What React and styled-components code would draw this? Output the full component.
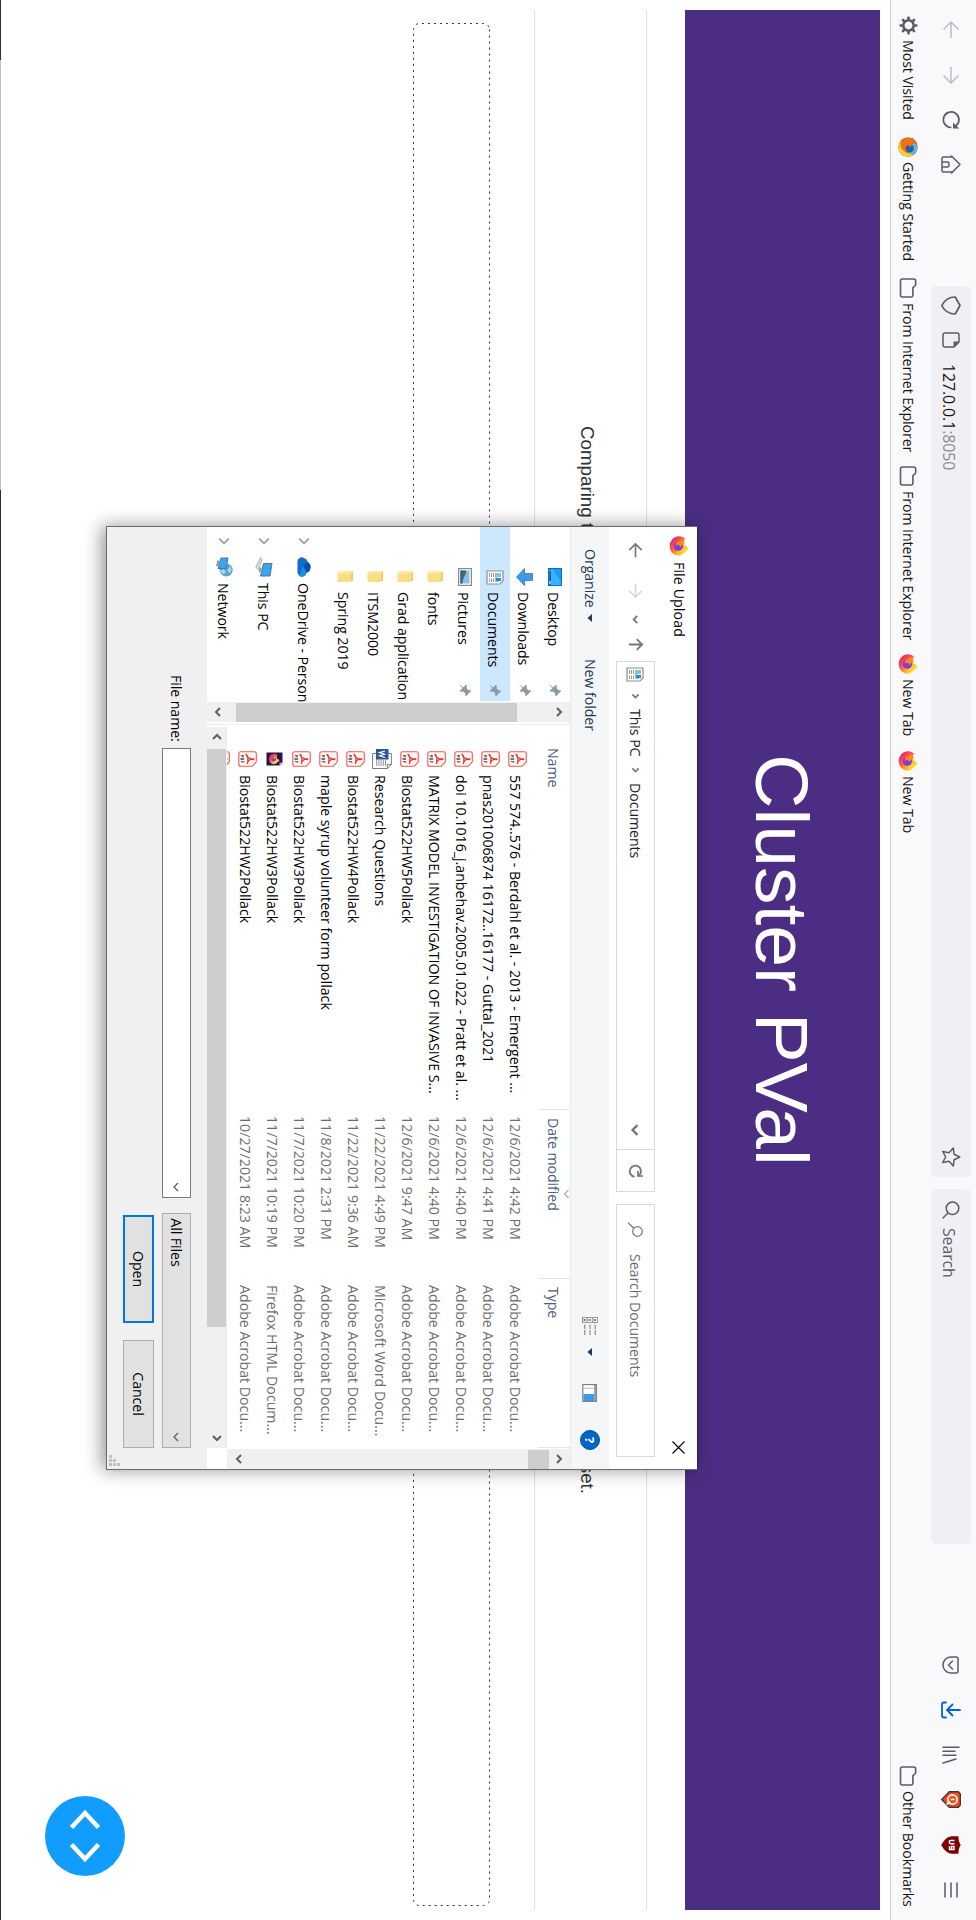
import React from 'react';
import styled, { createGlobalStyle, css } from 'styled-components';

const Global = createGlobalStyle`
  html, body { margin: 0; padding: 0; background: #fff; overflow: hidden; }
  * { box-sizing: border-box; }
`;

const ui = css`
  font-family: 'Open Sans', 'Noto Sans', sans-serif;
  font-size: 14.2px;
  letter-spacing: -0.08px;
  line-height: 20px;
  white-space: nowrap;
`;

/* ---------- screen ---------- */
const Viewport = styled.div`
  width: 976px;
  height: 1920px;
  overflow: hidden;
`;
const Screen = styled.div`
  ${ui}
  position: relative;
  display: flex;
  flex-direction: column;
  width: 1920px;
  height: 976px;
  background: #fff;
  color: #15141a;
  transform-origin: 0 0;
  transform: translateX(976px) rotate(90deg);
`;
const Svg = styled.svg`
  display: block;
  flex: none;
  overflow: visible;
`;

/* ---------- browser chrome ---------- */
const Chrome = styled.div`
  height: 86px;
  flex: none;
  background: #f9f9fb;
  border-bottom: 1px solid #cccccf;
`;
const NavBar = styled.div`
  display: flex;
  align-items: center;
  height: 50px;
  padding: 0 8px 0 7px;
`;
const NavButton = styled.div`
  display: flex;
  align-items: center;
  justify-content: center;
  width: 45px;
  height: 40px;
  opacity: ${(p) => (p.$off ? 0.4 : 1)};
`;
const Field = styled.div`
  display: flex;
  align-items: center;
  width: ${(p) => p.$width}px;
  height: 40px;
  margin-left: ${(p) => p.$left}px;
  padding: 0 10px 0 9px;
  border-radius: 5px;
  background: #f0f0f4;
  font-size: 15.9px;
  letter-spacing: -0.1px;
`;
const FieldText = styled.span`
  margin-left: ${(p) => p.$left}px;
  padding-top: 3px;
  flex: 1;
  color: ${(p) => p.$color || '#15141a'};
  i { font-style: normal; color: #8a8a90; }
`;
const IconSlot = styled.span`
  display: flex;
  justify-content: center;
  align-items: center;
  width: 20px;
  height: 20px;
  margin-left: ${(p) => p.$left || 0}px;
  flex: none;
`;
const Spacer = styled.div`
  flex: 1;
`;
const Bookmarks = styled.div`
  display: flex;
  align-items: center;
  height: 35px;
  padding-left: 15px;
`;
const Bookmark = styled.div`
  display: flex;
  align-items: center;
  gap: 5px;
  width: ${(p) => p.$width}px;
`;

/* ---------- page ---------- */
const Page = styled.main`
  display: flex;
  flex-direction: column;
  flex: 1;
  padding: 10px 10px 0;
  font-family: 'Liberation Sans', Arial, sans-serif;
`;
const Banner = styled.h1`
  display: flex;
  align-items: center;
  justify-content: center;
  height: 195px;
  margin: 0 0 38px;
  background: #4b2e83;
  color: #fff;
  font-weight: 400;
  font-size: 75px;
  letter-spacing: 0;
  line-height: 90px;
`;
const Intro = styled.section`
  display: flex;
  justify-content: space-between;
  height: 113px;
  padding: 48px 416px 0 416px;
  border-top: 1px solid #e1e1e1;
  border-bottom: 1px solid #e1e1e1;
  color: #333;
  font-size: 18.75px;
  letter-spacing: 0;
  line-height: 22px;
`;
const DropZone = styled.div`
  position: relative;
  width: 1883px;
  height: 77px;
  margin: 44px 0 0 13px;
`;
const DashOutline = styled(Svg)`
  position: absolute;
  inset: 0;
`;
const DebugButton = styled.button`
  position: absolute;
  left: 1796px;
  top: 851px;
  display: flex;
  align-items: center;
  justify-content: center;
  width: 80px;
  height: 80px;
  padding: 0;
  border: 0;
  border-radius: 50%;
  background: #119dff;
`;
const TaskbarEdge = styled.div`
  position: absolute;
  left: 0;
  right: 0;
  bottom: 0;
  height: 1px;
  background: linear-gradient(90deg, #333 60px, #c0c0c0 60px, #c0c0c0 490px, #2b2b2b 490px);
`;

/* ---------- dialog ---------- */
const Dialog = styled.div`
  position: absolute;
  left: 526px;
  top: 278px;
  display: flex;
  flex-direction: column;
  width: 944px;
  height: 592px;
  border: 1px solid #6b6b6b;
  border-top-color: #33215a;
  background: #fff;
  color: #000;
  box-shadow: 0 4px 17px rgba(0, 0, 0, 0.42);
`;
const TitleBar = styled.div`
  display: flex;
  align-items: center;
  height: 36px;
  margin-bottom: 1px;
  padding: 0 15px 0 9px;
  gap: 6px;
  letter-spacing: 0.1px;
`;
const AddressRow = styled.div`
  display: flex;
  align-items: center;
  height: 51px;
  padding: 0 0 2px 16px;
`;
const NavSlot = styled.div`
  display: flex;
  width: ${(p) => p.$width}px;
`;
const Outline = styled.div`
  display: flex;
  align-items: center;
  width: ${(p) => p.$width}px;
  height: 39px;
  margin-right: ${(p) => p.$gap || 0}px;
  padding-left: ${(p) => p.$pad}px;
  border: 1px solid #d9d9d9;
  color: ${(p) => p.$color || '#222'};
`;
const Crumb = styled.span`
  width: ${(p) => p.$width}px;
  padding-top: 1px;
`;
const RefreshCell = styled.div`
  display: flex;
  align-items: center;
  justify-content: center;
  width: 42px;
  height: 37px;
  margin-left: 13px;
  border-left: 1px solid #d9d9d9;
`;
const CommandBar = styled.div`
  display: flex;
  align-items: center;
  height: 39px;
  padding: 0 19px 0 22px;
  background: #f5f6f7;
  border-bottom: 1px solid #e8e9ea;
  color: #1e395b;
`;
const Command = styled.span`
  display: flex;
  align-items: center;
  width: ${(p) => p.$width}px;
  gap: 6px;
`;
const Body = styled.div`
  display: flex;
  height: 363px;
`;
const Tree = styled.div`
  width: 175px;
  overflow: hidden;
`;
const TreeRow = styled.div`
  display: flex;
  align-items: center;
  width: 174px;
  height: ${(p) => (p.$root ? 40 : 30)}px;
  margin-top: ${(p) => p.$top || 0}px;
  padding-left: ${(p) => (p.$root ? 8 : 40)}px;
  background: ${(p) => (p.$selected ? '#cce8ff' : 'transparent')};
`;
const TreeLabel = styled.span`
  flex: 1;
  margin-left: ${(p) => (p.$root ? 6 : 5)}px;
  padding-top: ${(p) => (p.$root ? 2 : 3)}px;
`;
const PinSlot = styled.span`
  width: 18px;
  height: 14px;
`;
const VBar = styled.div`
  display: flex;
  flex-direction: column;
  align-items: center;
  width: 20px;
  height: ${(p) => p.$height}px;
  padding: 6px 0;
  background: #f0f0f0;
`;
const VThumb = styled.div`
  width: 19px;
  height: ${(p) => p.$size}px;
  margin: ${(p) => p.$margin};
  background: #cdcdcd;
`;
const Files = styled.div`
  flex: 1;
  display: flex;
  flex-direction: column;
  margin-left: 2px;
  border-left: 1px solid #f0f0f0;
`;
const FilesTop = styled.div`
  display: flex;
  height: 343px;
`;
const Listing = styled.div`
  width: 724px;
  overflow: hidden;
`;
const HeaderRow = styled.div`
  display: flex;
  height: 32px;
  margin-bottom: 7px;
  color: #4c607a;
`;
const HeaderCell = styled.div`
  position: relative;
  width: ${(p) => p.$width}px;
  padding: 7px 0 0 ${(p) => p.$pad}px;
  border-right: 1px solid #e5e5e5;
`;
const SortMark = styled(Svg)`
  position: absolute;
  left: 79px;
  top: 1px;
`;
const FileRow = styled.div`
  display: flex;
  align-items: center;
  height: 27px;
  letter-spacing: -0.01px;
`;
const FileIcon = styled.span`
  display: flex;
  justify-content: center;
  width: 24px;
  margin-left: 22px;
`;
const FileName = styled.span`
  width: 345px;
  padding: 4px 0 0 4px;
`;
const Meta = styled.span`
  width: ${(p) => p.$width}px;
  padding-top: 4px;
  color: #6d6d6d;
`;
const HRow = styled.div`
  display: flex;
  height: 20px;
`;
const HBar = styled.div`
  display: flex;
  align-items: center;
  width: 721px;
  margin-left: 2px;
  height: 20px;
  padding-left: 5px;
  background: #f0f0f0;
`;
const HThumb = styled.div`
  width: 578px;
  height: 19px;
  margin: 1px 106px 0 7px;
  background: #cdcdcd;
`;
const Footer = styled.div`
  position: relative;
  flex: 1;
  padding: 16px 21px 0 148px;
  background: #f0f0f0;
`;
const FooterRow = styled.div`
  display: flex;
  align-items: center;
  justify-content: ${(p) => (p.$end ? 'flex-end' : 'flex-start')};
  gap: ${(p) => (p.$end ? 17 : 0)}px;
  margin-bottom: 8px;
`;
const FieldLabel = styled.span`
  width: 73px;
`;
const Combo = styled.div`
  display: flex;
  align-items: center;
  justify-content: space-between;
  width: ${(p) => p.$width}px;
  height: 29px;
  margin-right: ${(p) => p.$gap || 0}px;
  padding: 0 5px 0 4px;
  border: 1px solid ${(p) => (p.$input ? '#7a7a7a' : '#adadad')};
  background: ${(p) => (p.$input ? '#fff' : '#e1e1e1')};
`;
const Button = styled.button`
  ${ui}
  width: 108px;
  height: 31px;
  padding: 0;
  border: ${(p) => (p.$primary ? '2px solid #0078d7' : '1px solid #adadad')};
  background: #e1e1e1;
  color: #000;
`;
const Grip = styled(Svg)`
  position: absolute;
  right: 3px;
  bottom: 2px;
`;

/* ---------- icons ---------- */
const line = { fill: 'none', stroke: '#5b5b66', strokeWidth: 1.5, strokeLinecap: 'round', strokeLinejoin: 'round' };

const Arrow = ({ dir = 'left', color = '#5b5b66', size = 18, w = 1.4 }) => {
  const d = { left: 'M17 9H1M8.5 1.5L1 9l7.5 7.5', right: 'M1 9h16M9.500 1.500L17 9l-7.500 7.500', up: 'M9 17V1M2.500 7.500L9 1l6.500 6.500' }[dir];
  return <Svg width={size} height={size} viewBox="0 0 18 18"><path d={d} fill="none" stroke={color} strokeWidth={w} /></Svg>;
};
const Chevron = ({ dir, w = 10, h = 10, color = '#606060', stroke = 2 }) => {
  const d = { down: 'M1 3l4 4 4-4', up: 'M1 7l4-4 4 4', left: 'M7 1L3 5l4 4', right: 'M3 1l4 4-4 4' }[dir];
  return <Svg width={w} height={h} viewBox="0 0 10 10"><path d={d} fill="none" stroke={color} strokeWidth={stroke} /></Svg>;
};
const Reload = () => (
  <Svg width="18" height="18" viewBox="0 0 18 18">
    <path d="M16.500 9.300A7.800 7.800 0 1 1 14.500 3.600" {...line} strokeWidth="1.700" />
    <path d="M17.500 0.800v6.200h-6z" fill="#5b5b66" />
  </Svg>
);
const Home = () => (
  <Svg width="19" height="20" viewBox="0 0 19 20">
    <path d="M1 9.500L9.500 1 18 9.500M2 8.800V17.500Q2 19 3.500 19h12Q17 19 17 17.500V8.800M7 19v-5.500Q7 12 8.500 12h2Q12 12 12 13.500V19" {...line} />
  </Svg>
);
const Shield = () => (
  <Svg width="19" height="20" viewBox="0 0 19 20">
    <path d="M9.500 1L18 5.800C18 12 15 16.500 9.500 19.200 4 16.500 1 12 1 5.800z" {...line} strokeWidth="1.700" />
  </Svg>
);
const PageInfo = () => (
  <Svg width="16" height="18" viewBox="0 0 16 18">
    <path d="M10 1H3Q1 1 1 3v12q0 2 2 2h10q2 0 2-2V6z" {...line} />
    <path d="M9.500 1v5.500H15z" fill="#5b5b66" />
  </Svg>
);
const Star = () => (
  <Svg width="20" height="20" viewBox="0 0 20 20">
    <path d="M10 1.200l2.700 5.700 6.200.8-4.600 4.300 1.200 6.300L10 15.300l-5.500 3 1.200-6.300L1.100 7.700l6.200-.8z" {...line} />
  </Svg>
);
const Search = () => (
  <Svg width="18" height="18" viewBox="0 0 18 18">
    <circle cx="7.300" cy="7.500" r="6.300" {...line} /><path d="M12 12l5 5" {...line} />
  </Svg>
);
const Pocket = () => (
  <Svg width="18" height="17" viewBox="0 0 18 17">
    <path d="M3 1h12q2 0 2 2v5c0 5-4 8-8 8S1 13 1 8V3q0-2 2-2zM5 6.500l4 4 4-4" {...line} />
  </Svg>
);
const Download = () => (
  <Svg width="18" height="20" viewBox="0 0 18 20">
    <path d="M9 1v13M3.500 8.500L9 14l5.500-5.500M1.500 15v2q0 2 2 2h11q2 0 2-2v-2" fill="none" stroke="#0061e0" strokeWidth="1.800" strokeLinecap="round" />
  </Svg>
);
const Library = () => (
  <Svg width="18" height="18" viewBox="0 0 18 18"><path d="M1.200 1v16M5.200 5v12M9.200 4v13M13 4l4 13" {...line} /></Svg>
);
const RedShield = () => (
  <Svg width="17" height="20" viewBox="0 0 17 20">
    <path d="M3 .7h11l2.300 2v9L8.500 19.300.7 11.700v-9z" fill="#ff4619" stroke="#3c3c3c" strokeWidth="1.400" />
    <circle cx="8.500" cy="8.500" r="4.600" fill="none" stroke="#fff" strokeWidth="1.700" />
    <path d="M8.500 6.500v3.800M10.500 11l3 3.300" stroke="#fff" strokeWidth="1.700" />
  </Svg>
);
const Ublock = () => (
  <Svg width="18" height="20" viewBox="0 0 18 20">
    <path d="M9 .3Q12 2.500 17.700 2.600v7Q17 15.500 9 19.800 1 15.500.3 9.600v-7Q6 2.500 9 .3z" fill="#800000" />
    <path d="M4.500 6.500v3.800q0 1.500 1.600 1.500t1.600-1.500V6.500M10 11.500h3.500V7H10.500v2.500h3" fill="none" stroke="#fff" strokeWidth="1.400" />
  </Svg>
);
const Menu = () => (
  <Svg width="16" height="14" viewBox="0 0 16 14"><path d="M1 2h14M1 8h14M1 14h14" {...line} transform="translate(0 -1)" /></Svg>
);
const Gear = () => (
  <Svg width="19" height="19" viewBox="-9.500 -9.500 19 19">
    <circle r="5.200" fill="none" stroke="#5b5b66" strokeWidth="2.500" />
    {[0, 45, 90, 135, 180, 225, 270, 315].map((a) => (
      <rect key={a} x="-1.300" y="-9" width="2.600" height="3.500" rx=".8" fill="#5b5b66" transform={`rotate(${a})`} />
    ))}
  </Svg>
);
const FolderOutline = () => (
  <Svg width="20" height="18" viewBox="0 0 20 18">
    <path d="M1 3.500Q1 1.300 3.200 1.300H6q1.200 0 2 .9l1.700 1.900H17q2 0 2 2V14.500q0 2-2 2H3q-2 0-2-2z" {...line} strokeWidth="1.600" />
  </Svg>
);
const Firefox = ({ size = 20, id }) => (
  <Svg width={size} height={size} viewBox="0 0 20 20">
    <defs>
      <linearGradient id={id} x1=".85" y1=".1" x2=".15" y2=".85">
        <stop offset="0" stopColor="#fff044" /><stop offset=".35" stopColor="#ffb52e" />
        <stop offset=".6" stopColor="#ff6a34" /><stop offset="1" stopColor="#f0246c" />
      </linearGradient>
    </defs>
    <path d="M13 .2C15 2 15.500 3 16.500 4.200c1 .7 3.300 3 3.300 6.600A9.800 9.300 0 0 1 .3 11C.1 8 1.200 5 3.200 3.200c0 1 .2 1.500.7 2 1.500-.8 4-.8 5.300-.2C9.800 3 11 1.300 13 .2z" fill={`url(#${id})`} />
    <circle cx="10.200" cy="10.600" r="4.500" fill="#7a3be0" />
    <path d="M3.500 5.500C6 4.500 8 5.500 9.300 7.500c1 .3 1.500.5 1.600 1-.3 1-2.200 1-2.400 2.300-.2 1 .8 1.700 2 1.700-2 1.500-5 .2-5-2.700C4 9 3.500 7 3.500 5.500z" fill="#ff8a1c" />
    <path d="M12 6c2 .8 3.300 2.500 3.100 5C17 8.500 15.500 5.500 12 6z" fill="#ffd43a" />
  </Svg>
);
const OldFirefox = () => (
  <Svg width="20" height="20" viewBox="0 0 20 20">
    <circle cx="10" cy="10" r="9.800" fill="#e8661a" />
    <path d="M6.500 2.500Q10-.5 15 1.800 18.500 5 17.500 9l-4 2.500-6-3z" fill="#5ab9e2" />
    <circle cx="11.300" cy="8.500" r="4.300" fill="#1f62a8" />
    <path d="M1 5c2-.5 4 0 6 1.500 2 0 3.500.8 3.500 1.500-1.500.5-2.500 1.500-2 3 1.500 2 5 1.800 7-.5.800 4-2 7-6 6.500C4 16.500.5 11 1 5z" fill="#f0731c" />
    <path d="M17.600 4.300c3.600 5.200 1.900 12-4.600 15C9 20 5 18.500 3 16.500c7 2.500 13.500-.5 14.600-12.200z" fill="#ffcf3a" />
  </Svg>
);
const DocsIcon = ({ w = 15, h = 18 }) => (
  <Svg width={w} height={h} viewBox="0 0 15 18">
    <path d="M1 1h10l3 3v13H1z" fill="#fff" stroke="#8b8b8b" strokeWidth="1.200" />
    <path d="M3 4h4M3 6h4M9 6h3M3 8h9" stroke="#2d8ad0" strokeWidth="1.100" />
    <rect x="8" y="3" width="3" height="5" fill="#2d8ad0" />
    <path d="M3 10.500h4M8.500 10.500H12M3 12.500h4M8.500 12.500H12M3 14.500h4M8.500 14.500H12" stroke="#9a9a9a" />
  </Svg>
);
const DesktopIcon = () => (
  <Svg width="18" height="14" viewBox="0 0 18 14">
    <rect x=".5" y=".5" width="17" height="13" fill="#1c9df2" stroke="#0c6fbd" />
    <path d="M1 9L14 1h3v10H1z" fill="#39b2ff" /><path d="M1 11.800h16" stroke="#0b5fa5" strokeWidth="1.500" />
    <path d="M2 12h1M13 12h3" stroke="#fff" />
  </Svg>
);
const DownIcon = () => (
  <Svg width="18" height="17" viewBox="0 0 18 17">
    <path d="M5.500.5h7v8h5L9 16.500.5 8.500h5z" fill="#3e9bec" stroke="#2a79c4" strokeWidth=".8" />
  </Svg>
);
const PictureIcon = () => (
  <Svg width="18" height="14" viewBox="0 0 18 14">
    <rect x=".6" y=".6" width="16.800" height="12.800" fill="#fff" stroke="#8a8a8a" strokeWidth="1.200" />
    <rect x="2.500" y="2.500" width="13" height="9" fill="#8dbde8" />
    <path d="M2.500 6c4-1 5 3 13 3.500v2h-13z" fill="#3e6f63" /><path d="M2.500 10h13v1.500h-13z" fill="#2d5ea9" />
  </Svg>
);
const FolderIcon = () => (
  <Svg width="18" height="18" viewBox="0 0 18 18">
    <path d="M3 1h10v14H3z" fill="#f3cd6c" /><path d="M5.500 3H14v13.500H4.500z" fill="#fbdd86" />
    <path d="M3 1l2.500 2v13.500L3 15z" fill="#ffe9a8" />
  </Svg>
);
const OneDriveIcon = () => (
  <Svg width="20" height="14" viewBox="0 0 20 14">
    <path d="M1.200 6.500A4.500 4.500 0 0 1 5 3.400 6 6 0 0 1 15.800 4.500 4.300 4.300 0 0 1 18.500 11.700Q17.500 13.500 15 13.500H5Q1.500 13.500.4 10.500-.2 8.500 1.200 6.500z" fill="#0f6cce" />
    <path d="M5 3.400A6 6 0 0 1 15.800 4.500L9 8z" fill="#0a4fa8" /><path d="M9 8l6.800-3.500a4.300 4.300 0 0 1 2.700 7.200z" fill="#1f8ceb" />
  </Svg>
);
const PcIcon = () => (
  <Svg width="20" height="18" viewBox="0 0 20 18">
    <path d="M6.500 1L19 3v9.500L6.500 9.500z" fill="#35a7f5" stroke="#53758f" />
    <path d="M11 11.500l5 1.500-2 1.500-4-1.500z" fill="#8c9499" />
    <path d="M.5 12.500L3 10.800l9.500 4.200-2.500 2.300z" fill="#d7dbde" stroke="#9ba3a8" strokeWidth=".7" />
  </Svg>
);
const NetworkIcon = () => (
  <Svg width="20" height="18" viewBox="0 0 20 18">
    <circle cx="13" cy="6.800" r="6.500" fill="#5ba4c9" /><path d="M9 3q4-3 7 0l-2 3zM12 9l4-2 1 3-3 3z" fill="#a8d8e8" />
    <path d="M1 5l10.500 2v8L1 12z" fill="#35a7f5" stroke="#53758f" /><path d="M4 13.500l5 1.500v2l-6-1.500z" fill="#8c9499" />
  </Svg>
);
const PinIcon = () => (
  <Svg width="14" height="14" viewBox="0 0 14 14">
    <path d="M8 .8L13.200 6 12 7 10.800 6.600 8.600 8.800 8.800 11.500 7.800 12.300 5.200 9.600.8 13.200 4.400 8.800 1.700 6.200 2.600 5.200 5.200 5.400 7.400 3.200 7 2z" fill="#8d99a3" />
  </Svg>
);
const PdfIcon = () => (
  <Svg width="16" height="19" viewBox="0 0 16 19">
    <path d="M2.500.7h8.300l4.500 4v11.500q0 2-2 2H2.700q-2 0-2-2V2.700q0-2 1.800-2z" fill="#fff8f7" stroke="#f5564f" strokeWidth="1.100" />
    <path d="M3 11.300C6.500 9.800 8 7 7.800 4.300 7.500 2.500 9 2.800 8.500 4.800 8.300 8 10.500 9.300 13 9.600M3 11.300c1-2 5.500-2.500 10-1.700" fill="none" stroke="#ea3a32" strokeWidth="1.250" />
    <path d="M4.500 13.200v3M4.500 13.700h1.400v1.200H4.500M7.300 13.200v3h1.200v-3zM10.500 16.200v-3h1.500M10.500 14.800h1.200" fill="none" stroke="#444" strokeWidth=".75" />
  </Svg>
);
const WordIcon = () => (
  <Svg width="20" height="20" viewBox="0 0 20 20">
    <path d="M4.500.6h11l4 4v14.800h-15z" fill="#fff" stroke="#7c7c7c" />
    <path d="M15.500.6v4h4" fill="none" stroke="#7c7c7c" />
    <path d="M11 6.500h6M11 8.700h6M11 10.900h6M11 13.100h6M6.500 15.300H17" stroke="#8a8a8a" strokeWidth=".9" />
    <rect x="0" y="3.500" width="10.500" height="12.500" fill="#2b579a" />
    <path d="M2 7l1.600 5.500L5.200 7.500l1.600 5L8.500 7" fill="none" stroke="#fff" strokeWidth="1.200" />
  </Svg>
);
const HtmlIcon = () => (
  <Svg width="14" height="17" viewBox="0 0 14 17">
    <path d="M.5.500h10l3 3v13H.5z" fill="#25164e" /><path d="M10.500.500l3 3h-3z" fill="#b6a6e6" />
    <g transform="translate(1.500 3.500) scale(.54)"><Firefox id="ffh" /></g>
  </Svg>
);
const Triangle = () => <Svg width="8" height="5" viewBox="0 0 8 5"><path d="M0 0h8L4 4.600z" fill="#1e395b" /></Svg>;
const Refresh = () => (
  <Svg width="14" height="15" viewBox="0 0 14 15">
    <path d="M11.700 4.200A5.600 5.600 0 1 0 12.800 8.500" fill="none" stroke="#777" strokeWidth="1.900" />
    <path d="M12 0v5H7" fill="none" stroke="#777" strokeWidth="1.700" />
  </Svg>
);
const DialogSearch = () => (
  <Svg width="15" height="16" viewBox="0 0 15 16">
    <circle cx="9.500" cy="5.500" r="4.800" fill="none" stroke="#777" strokeWidth="1.200" />
    <path d="M6.200 9L.8 15" stroke="#777" strokeWidth="1.300" />
  </Svg>
);
const ViewIcon = () => (
  <Svg width="18" height="16" viewBox="0 0 18 16">
    {['#4a9a8a', '#7c9a3c', '#b5483a'].map((c, i) => (
      <g key={c} transform={`translate(0 ${i * 5.2})`}>
        <rect x=".5" y=".5" width="5" height="4.600" fill="#fff" stroke="#999" /><rect x="2" y="2" width="2" height="2" fill={c} />
        <path d="M7.500 2.800h4.500M13 2.800h5" stroke="#777" />
      </g>
    ))}
  </Svg>
);
const PaneIcon = () => (
  <Svg width="18" height="15" viewBox="0 0 18 15">
    <rect x=".6" y=".6" width="16.800" height="13.600" fill="#fff" stroke="#808080" strokeWidth="1.200" />
    <path d="M1 2h16" stroke="#808080" strokeWidth="1.400" /><path d="M4.200 3v11" stroke="#bbb" /><rect x="10" y="3" width="7" height="10.600" fill="#3f9ae5" />
  </Svg>
);
const Help = styled.span`
  display: flex;
  align-items: center;
  justify-content: center;
  width: 20px;
  height: 20px;
  border-radius: 50%;
  border: 1px solid #00539c;
  background: #0067c5;
  color: #fff;
  font-weight: 700;
  font-size: 13px;
`;
const CloseIcon = () => (
  <Svg width="13" height="13" viewBox="0 0 13 13"><path d="M.5.500l12 12M12.500.500l-12 12" stroke="#000" strokeWidth="1.100" /></Svg>
);

/* ---------- data ---------- */
const tree = [
  ['Desktop', <DesktopIcon />, true],
  ['Downloads', <DownIcon />, true],
  ['Documents', <DocsIcon />, true],
  ['Pictures', <PictureIcon />, true],
  ['fonts', <FolderIcon />],
  ['Grad application', <FolderIcon />],
  ['ITSM2000', <FolderIcon />],
  ['Spring 2019', <FolderIcon />],
];
const roots = [
  ['OneDrive - Person', <OneDriveIcon />],
  ['This PC', <PcIcon />],
  ['Network', <NetworkIcon />],
];
const pdf = 'Adobe Acrobat Docu...';
const files = [
  ['557 574..576 - Berdahl et al. - 2013 - Emergent ...', '12/6/2021 4:42 PM', pdf],
  ['pnas201006874 16172..16177 - Guttal_2021', '12/6/2021 4:41 PM', pdf],
  ['doi 10.1016_j.anbehav.2005.01.022 - Pratt et al. ...', '12/6/2021 4:40 PM', pdf],
  ['MATRIX MODEL INVESTIGATION OF INVASIVE S...', '12/6/2021 4:40 PM', pdf],
  ['Biostat522HW5Pollack', '12/6/2021 9:47 AM', pdf],
  ['Research Questions', '11/22/2021 4:49 PM', 'Microsoft Word Docu...', <WordIcon />],
  ['Biostat522HW4Pollack', '11/22/2021 9:36 AM', pdf],
  ['maple syrup volunteer form pollack', '11/8/2021 2:31 PM', pdf],
  ['Biostat522HW3Pollack', '11/7/2021 10:20 PM', pdf],
  ['Biostat522HW3Pollack', '11/7/2021 10:19 PM', 'Firefox HTML Docum...', <HtmlIcon />],
  ['Biostat522HW2Pollack', '10/27/2021 8:23 AM', pdf],
  ['', '', ''],
];

const Mark = ({ icon, width, children }) => (
  <Bookmark $width={width}><IconSlot>{icon}</IconSlot>{children}</Bookmark>
);

function BrowserChrome() {
  return (
    <Chrome>
      <NavBar>
        <NavButton $off><Arrow dir="left" /></NavButton>
        <NavButton $off><Arrow dir="right" /></NavButton>
        <NavButton><Reload /></NavButton>
        <NavButton><Home /></NavButton>
        <Field $width={891} $left={99}>
          <IconSlot><Shield /></IconSlot>
          <IconSlot $left={15}><PageInfo /></IconSlot>
          <FieldText $left={14}>127.0.0.1<i>:8050</i></FieldText>
          <IconSlot><Star /></IconSlot>
        </Field>
        <Field $width={355} $left={12}>
          <IconSlot $left={2}><Search /></IconSlot>
          <FieldText $left={8} $color="#5b5b66">Search</FieldText>
        </Field>
        <Spacer />
        <NavButton><Pocket /></NavButton>
        <NavButton><Download /></NavButton>
        <NavButton><Library /></NavButton>
        <NavButton><RedShield /></NavButton>
        <NavButton><Ublock /></NavButton>
        <NavButton><Menu /></NavButton>
      </NavBar>
      <Bookmarks>
        <Mark icon={<Gear />} width={122}>Most Visited</Mark>
        <Mark icon={<OldFirefox />} width={141}>Getting Started</Mark>
        <Mark icon={<FolderOutline />} width={188}>From Internet Explorer</Mark>
        <Mark icon={<FolderOutline />} width={188}>From Internet Explorer</Mark>
        <Mark icon={<Firefox id="ff1" />} width={97}>New Tab</Mark>
        <Mark icon={<Firefox id="ff2" />} width={97}>New Tab</Mark>
        <Spacer />
        <Mark icon={<FolderOutline />} width={154}>Other Bookmarks</Mark>
      </Bookmarks>
    </Chrome>
  );
}

function FileDialog() {
  return (
    <Dialog>
      <TitleBar>
        <Firefox id="ff3" /><span>File Upload</span><Spacer /><CloseIcon />
      </TitleBar>
      <AddressRow>
        <NavSlot $width={40}><Arrow dir="left" size={15} color="#777" w={2} /></NavSlot>
        <NavSlot $width={32}><Arrow dir="right" size={15} color="#d8d8d8" w={2} /></NavSlot>
        <NavSlot $width={22}><Chevron dir="down" w={9} h={9} color="#777" /></NavSlot>
        <NavSlot $width={24}><Arrow dir="up" size={15} color="#777" w={2.2} /></NavSlot>
        <Outline $width={531} $gap={12} $pad={5}>
          <NavSlot $width={25}><DocsIcon /></NavSlot>
          <NavSlot $width={17}><Chevron dir="right" w={8} h={9} color="#777" /></NavSlot>
          <Crumb $width={57}>This PC</Crumb>
          <NavSlot $width={17}><Chevron dir="right" w={8} h={9} color="#777" /></NavSlot>
          <Crumb>Documents</Crumb>
          <Spacer />
          <Chevron dir="down" w={12} h={12} color="#777" />
          <RefreshCell><Refresh /></RefreshCell>
        </Outline>
        <Outline $width={253} $pad={17} $color="#6d6d6d">
          <NavSlot $width={32}><DialogSearch /></NavSlot>
          <Crumb>Search Documents</Crumb>
        </Outline>
      </AddressRow>
      <CommandBar>
        <Command $width={110}>Organize <Triangle /></Command>
        <Command>New folder</Command>
        <Spacer />
        <Command $width={31}><ViewIcon /></Command>
        <Command $width={36}><Triangle /></Command>
        <Command $width={46}><PaneIcon /></Command>
        <Help>?</Help>
      </CommandBar>
      <Body>
        <Tree>
          {tree.map(([label, icon, pinned]) => (
            <TreeRow key={label} $selected={label === 'Documents'}>
              <IconSlot>{icon}</IconSlot>
              <TreeLabel>{label}</TreeLabel>
              {pinned && <PinSlot><PinIcon /></PinSlot>}
            </TreeRow>
          ))}
          {roots.map(([label, icon], i) => (
            <TreeRow key={label} $root $top={i === 0 ? 6 : 0}>
              <Chevron dir="right" w={12} h={12} color="#a6a6a6" stroke={1.7} />
              <IconSlot $left={10}>{icon}</IconSlot>
              <TreeLabel $root>{label}</TreeLabel>
            </TreeRow>
          ))}
        </Tree>
        <VBar $height={363}>
          <Chevron dir="up" />
          <VThumb $size={282} $margin="37px 0 13px" />
          <Chevron dir="down" />
        </VBar>
        <Files>
          <FilesTop>
            <Listing>
              <HeaderRow>
                <HeaderCell $width={385} $pad={23}>Name</HeaderCell>
                <HeaderCell $width={169} $pad={8}>
                  Date modified
                  <SortMark width="10" height="6" viewBox="0 0 10 6"><path d="M1 .5l4 4 4-4" fill="none" stroke="#777" /></SortMark>
                </HeaderCell>
                <HeaderCell $width={169} $pad={8}>Type</HeaderCell>
              </HeaderRow>
              {files.map(([name, date, type, icon], i) => (
                <FileRow key={i}>
                  <FileIcon>{icon || <PdfIcon />}</FileIcon>
                  <FileName>{name}</FileName>
                  <Meta $width={169}>{date}</Meta>
                  <Meta>{type}</Meta>
                </FileRow>
              ))}
            </Listing>
            <VBar $height={343}>
              <Chevron dir="up" />
              <VThumb $size={21} $margin="5px 0 284px" />
              <Chevron dir="down" />
            </VBar>
          </FilesTop>
          <HRow>
            <HBar>
              <Chevron dir="left" />
              <HThumb />
              <Chevron dir="right" />
            </HBar>
          </HRow>
        </Files>
      </Body>
      <Footer>
        <FooterRow>
          <FieldLabel>File name:</FieldLabel>
          <Combo $input $width={451} $gap={15}><span /><Chevron dir="down" stroke={1.3} /></Combo>
          <Combo $width={235}><span>All Files</span><Chevron dir="down" stroke={1.3} /></Combo>
        </FooterRow>
        <FooterRow $end>
          <Button $primary>Open</Button>
          <Button>Cancel</Button>
        </FooterRow>
        <Grip width="11" height="11" viewBox="0 0 11 11">
          <path d="M8 0h3v3H8zM4 4h3v3H4zM8 4h3v3H8zM0 8h3v3H0zM4 8h3v3H4zM8 8h3v3H8z" fill="#bfbfbf" />
        </Grip>
      </Footer>
    </Dialog>
  );
}

export default function App() {
  return (
    <Viewport>
      <Global />
      <Screen>
        <BrowserChrome />
        <Page>
          <Banner>Cluster PVal</Banner>
          <Intro><span>Comparing t</span><span>set.</span></Intro>
          <DropZone>
            <DashOutline width="1883" height="77" viewBox="0 0 1883 77">
              <rect x=".5" y=".5" width="1882" height="76" rx="6" fill="none" stroke="#333" strokeDasharray="2 4" />
            </DashOutline>
          </DropZone>
        </Page>
        <DebugButton>
          <Svg width="54" height="30" viewBox="0 0 54 30">
            <path d="M18.500 1.500L4 15l14.500 13.500M35.500 1.500L50 15 35.500 28.500" fill="none" stroke="#fff" strokeWidth="4.500" />
          </Svg>
        </DebugButton>
        <TaskbarEdge />
        <FileDialog />
      </Screen>
    </Viewport>
  );
}
